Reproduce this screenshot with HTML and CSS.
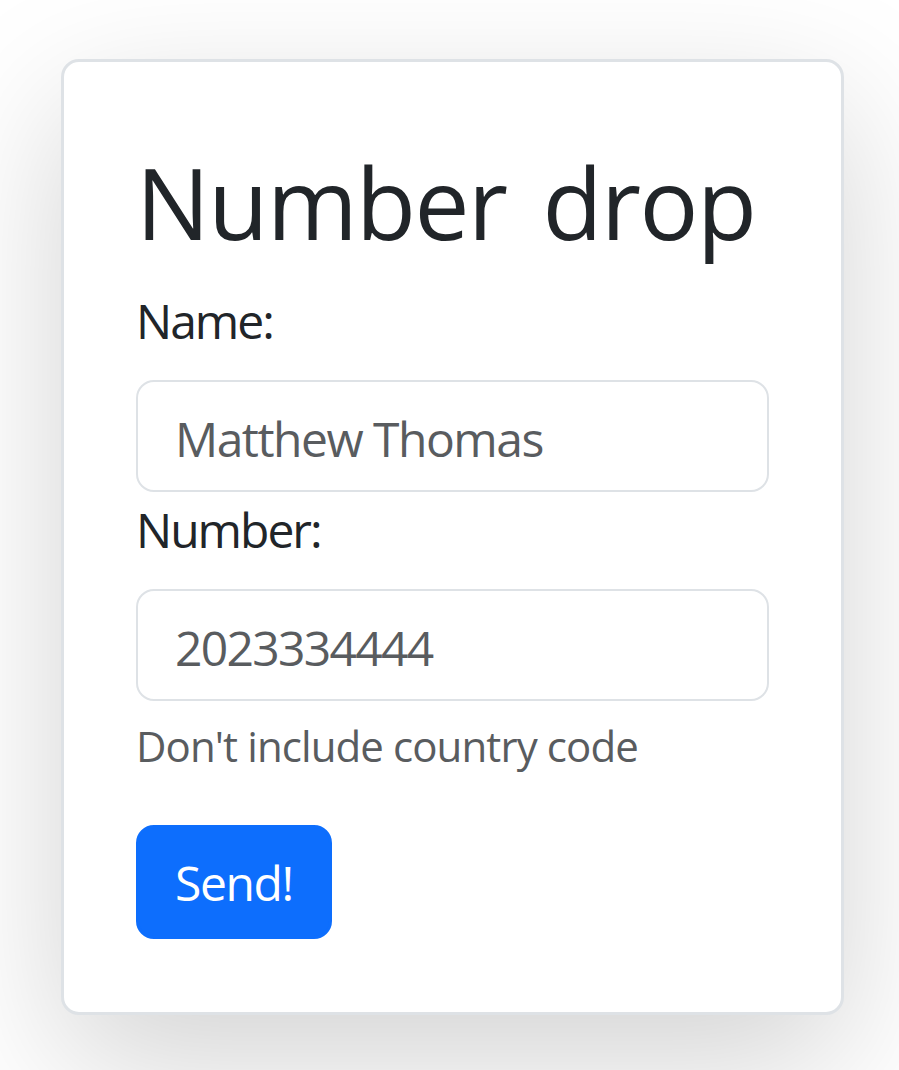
FILE: index.html
```html
<!DOCTYPE html>
<html lang="en">
<head>
<meta charset="utf-8">
<title>Number drop</title>
<link rel="stylesheet" href="styles.css">
</head>
<body>
<main class="page">
  <section class="card">
    <h1 class="title">Number drop</h1>
    <form class="form">
      <label class="label" for="name">Name:</label>
      <input class="field field-name" id="name" type="text" placeholder="Matthew Thomas">
      <label class="label label-number" for="number">Number:</label>
      <input class="field field-number" id="number" type="tel" placeholder="2023334444">
      <div class="help">Don't include country code</div>
      <div class="actions"><button class="btn" type="button">Send!</button></div>
    </form>
  </section>
</main>
</body>
</html>
```
FILE: styles.css
```css
html, body {
  margin: 0;
  padding: 0;
  background: #ffffff;
}
body {
  font-family: "Open Sans", "Noto Sans", sans-serif;
  color: #212529;
}
.page {
  box-sizing: border-box;
  min-height: 1070px;
  padding: 59px 55px 40px 61px;
}
.card {
  width: 783px;
  box-sizing: border-box;
  border: 3px solid #dee2e6;
  border-radius: 18px;
  background: #fff;
  padding: 72px 72px 73px;
  box-shadow: 0 48px 144px rgba(0, 0, 0, 0.175);
}
.title {
  margin: 0 0 15px;
  font-size: 98px;
  line-height: 136px;
  font-weight: 400;
  letter-spacing: -1.5px;
  word-spacing: 12px;
  white-space: nowrap;
}
.form {
  display: flex;
  flex-direction: column;
  align-items: stretch;
}
.label {
  font-size: 48px;
  line-height: 72px;
  margin-bottom: 23px;
  letter-spacing: -2px;
}
.label-number {
  margin-top: 2px;
}
.field {
  box-sizing: border-box;
  width: 100%;
  height: 112px;
  border: 2px solid #dee2e6;
  border-radius: 18px;
  padding: 20px 37px 16px;
  font-family: inherit;
  font-size: 48px;
  line-height: 72px;
  color: #212529;
  background: #fff;
  outline: none;
}
.field-name {
  letter-spacing: -1.5px;
}
.field-number {
  letter-spacing: -1.7px;
}
.field::placeholder {
  color: #595c5f;
  opacity: 1;
}
.help {
  margin-top: 13px;
  font-size: 42px;
  line-height: 63px;
  color: #595c5f;
  letter-spacing: -0.9px;
}
.actions {
  margin-top: 48px;
  display: flex;
}
.btn {
  font-family: inherit;
  font-size: 48px;
  line-height: 72px;
  letter-spacing: -1.4px;
  color: #fff;
  background: #0d6efd;
  border: 3px solid #0d6efd;
  border-radius: 18px;
  padding: 19px 36px 17px;
  cursor: pointer;
}
```
